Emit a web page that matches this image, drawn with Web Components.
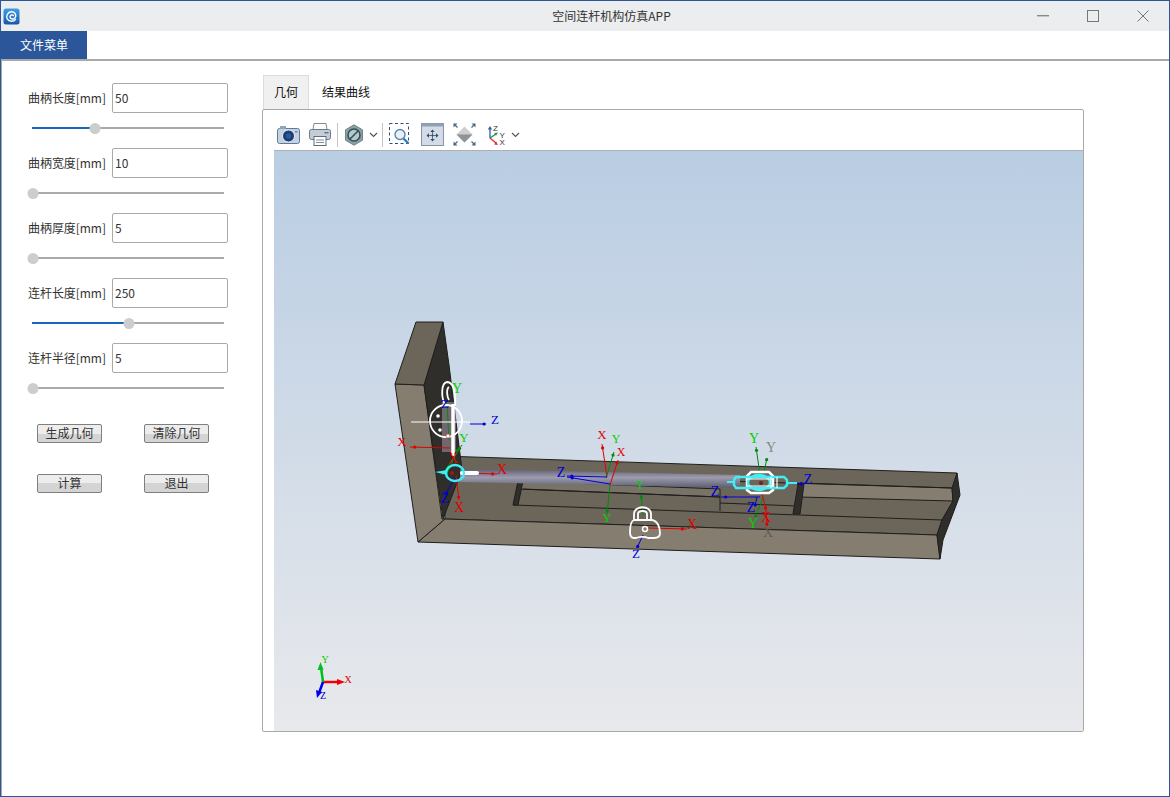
<!DOCTYPE html>
<html lang="zh"><head><meta charset="utf-8"><title>空间连杆机构仿真APP</title>
<style>
html,body{margin:0;padding:0;background:#fff}
body{font:12px "Noto Sans CJK SC","Liberation Sans",sans-serif;color:#333}
</style></head><body>
<app-window>
  <title-bar slot="title">空间连杆机构仿真APP</title-bar>
  <menu-bar slot="menu">文件菜单</menu-bar>
  <side-panel slot="side">
    <param-row label="曲柄长度[mm]" value="50" pct="33"></param-row>
    <param-row label="曲柄宽度[mm]" value="10" pct="0.5"></param-row>
    <param-row label="曲柄厚度[mm]" value="5" pct="0.5"></param-row>
    <param-row label="连杆长度[mm]" value="250" pct="50.5"></param-row>
    <param-row label="连杆半径[mm]" value="5" pct="0.5"></param-row>
    <button-grid>
      <push-btn>生成几何</push-btn><push-btn>清除几何</push-btn>
      <push-btn>计算</push-btn><push-btn>退出</push-btn>
    </button-grid>
  </side-panel>
  <tab-view slot="main">
    <cad-toolbar></cad-toolbar>
    <cad-viewport></cad-viewport>
  </tab-view>
</app-window>
<script>
const def=(name,css,html,init)=>customElements.define(name,class extends HTMLElement{
  connectedCallback(){ if(this.shadowRoot)return; const r=this.attachShadow({mode:'open'});
    r.innerHTML='<style>'+css+'</style>'+(typeof html==='function'?html(this):html); if(init)init(r,this);}
});
def('app-window',`:host{display:flex;flex-direction:column;box-sizing:border-box;width:1170px;height:797px;border:1px solid #2b579a;background:#fff;overflow:hidden}
.body{flex:1;display:flex;border-top:2px solid #a9a9a9;border-left:1px solid #a9a9a9;min-height:0}`,
`<slot name="title"></slot><slot name="menu"></slot><div class="body"><slot name="side"></slot><slot name="main"></slot></div>`);
def('title-bar',`:host{display:flex;align-items:center;height:30px;background:#ebedef;color:#333;font-size:12px}
.ic{margin:0 0 0 2px;display:block}
.t{flex:1;text-align:center;padding:0 0 2px 183px}
.b{width:46px;height:30px;display:flex;align-items:center;justify-content:center}
.bs{display:flex;margin-right:3px}`,
`<svg class="ic" width="17" height="17" viewBox="0 0 17 17"><defs><linearGradient id="g" x1="0" y1="0" x2="0" y2="1"><stop offset="0" stop-color="#3f9fe8"/><stop offset="1" stop-color="#1557a8"/></linearGradient></defs><rect x=".5" y=".5" width="16" height="16" rx="2.5" fill="url(#g)"/><path d="M12.6 11.4C10.8 14 6.2 13.9 4.4 11.2 2.6 8.2 4.6 4 8.4 3.800c3-.1 4.800 2.200 4.300 4.600-.4 2-2.600 3.100-4.300 2.400-1.400-.6-1.800-2.400-.8-3.400.8-.8 2.200-.7 2.800.2" fill="none" stroke="#fff" stroke-width="1.400" stroke-linecap="round"/></svg>
<div class="t"><slot></slot></div>
<div class="bs"><div class="b"><svg width="12" height="2"><rect width="12" height="1.400" fill="#8a8a8a"/></svg></div><div class="b" style="margin-left:4px"><svg width="12" height="12"><rect x=".5" y=".5" width="11" height="11" fill="none" stroke="#777"/></svg></div><div class="b" style="margin-left:4px"><svg width="12" height="12"><path d="M.5.5l11 11M11.500.5l-11 11" stroke="#777" fill="none"/></svg></div></div>`);
def('menu-bar',`:host{display:flex;height:28px;background:#fff}
.m{width:86px;background:#2b579a;color:#fff;display:flex;align-items:center;justify-content:center;font-size:12px;padding-bottom:1px;box-sizing:border-box}`,`<div class="m"><slot></slot></div>`);
def('side-panel',`:host{display:block;width:260px;flex:none;box-sizing:border-box;padding:22px 0 0 0}`,`<slot></slot>`);
def('param-row',`:host{display:block;height:65px}
.r{display:flex;align-items:center;height:30px;padding-left:26px}
.l{width:84px;flex:none;font-size:12px;color:#333;white-space:nowrap;padding-bottom:2px;letter-spacing:-.05px}
.i{box-sizing:border-box;width:116px;height:30px;border:1px solid #a9a9a9;border-radius:2px;padding:0 0 2px 2px;display:flex;align-items:center;font:12px "Noto Sans CJK SC","Liberation Sans",sans-serif;color:#333}
.s{position:relative;margin:13px 0 0 30px;width:192px;height:4px;background:linear-gradient(#aaa,#aaa) center/100% 2px no-repeat}
.f{height:100%;background:linear-gradient(#1468bd,#1468bd) center/100% 2px no-repeat}
.h{position:absolute;top:-3.500px;width:11px;height:11px;border-radius:50%;background:#cdcdcd;transform:translateX(-5.500px)}`,
h=>`<div class="r"><span class="l">${h.getAttribute('label')}</span><span class="i">${h.getAttribute('value')}</span></div>
<div class="s"><div class="f" style="width:${h.getAttribute('pct')==='0.5'?0:h.getAttribute('pct')}%"></div><div class="h" style="left:${h.getAttribute('pct')}%"></div></div>`);
def('button-grid',`:host{display:grid;grid-template-columns:65px 65px;column-gap:42px;row-gap:31px;padding:16px 0 0 35px}`,`<slot></slot>`);
def('push-btn',`:host{display:block;box-sizing:border-box;height:19px;border:1px solid #7f7f7f;border-radius:2px;background:linear-gradient(#ededed 0,#ededed 50%,#d4d4d4 50%,#d4d4d4 100%);font-size:12px;line-height:16px;text-align:center;color:#333}`,`<slot></slot>`);
def('tab-view',`:host{display:flex;flex-direction:column;flex:none;width:822px;margin:14px 0 0 0;height:657px}
.tabs{display:flex;height:34px;flex:none;padding-left:1px}
.tab{display:flex;align-items:center;justify-content:center;font-size:12px;color:#111;box-sizing:border-box;padding-bottom:2px}
.a{width:46px;background:#f0f0f0;border:1px solid #dcdcdc;border-bottom:0}
.n{width:74px}
.pane{flex:1;min-height:0;border:1px solid #a9a9a9;border-radius:2px;padding-left:11px;display:flex;flex-direction:column}`,
`<div class="tabs"><div class="tab a">几何</div><div class="tab n">结果曲线</div></div><div class="pane"><slot></slot></div>`);
const chev=m=>`<svg width="9" height="6" style="margin-left:${m}px" viewBox="0 0 9 6"><path d="M1 1l3.500 3.500L8 1" fill="none" stroke="#555" stroke-width="1.200"/></svg>`;
def('cad-toolbar',`:host{display:flex;align-items:center;box-sizing:border-box;height:40px;flex:none;padding-top:9px}
svg{display:block;flex:none}.sp{width:1px;height:24px;background:#c4c4c4;flex:none}`,
`<svg width="23" height="19" style="margin-left:3px" viewBox="0 0 23 19"><rect x=".5" y="3.500" width="22" height="15" rx="2" fill="#c4d2e2" stroke="#5f7a96"/><rect x="3" y="1" width="6" height="3" fill="#8ea4bc"/><circle cx="11.500" cy="11" r="6" fill="#1b3d72" stroke="#e6edf5"/><circle cx="11.500" cy="11" r="2.800" fill="#2a589c"/><rect x="18" y="6" width="2.500" height="1.500" fill="#6f8aa6"/></svg>
<svg width="22" height="23" style="margin-left:9px" viewBox="0 0 22 23"><path d="M5 .5h12l1 6H4z" fill="#fff" stroke="#7f8c9a"/><rect x=".5" y="6.500" width="21" height="10" rx="2" fill="#c4ccd6" stroke="#6a7a8a"/><rect x="5" y="13.500" width="12" height="9" fill="#fff" stroke="#5f6c7a"/><path d="M7 17h8M7 19.500h8" stroke="#7f8c9a"/><rect x="15.500" y="9" width="4" height="1.400" fill="#59738f"/></svg>
<div class="sp" style="margin-left:6px"></div>
<svg width="20" height="22" style="margin-left:6px" viewBox="0 0 20 22"><path d="M10 .8l8.500 5v10.400l-8.500 5-8.500-5V5.800z" fill="#8aa0a4" stroke="#6f8588"/><circle cx="10" cy="11" r="6" fill="#b7c8cb" stroke="#33505a" stroke-width="1.600"/><path d="M6 15l8-8" stroke="#33505a" stroke-width="1.600"/></svg>
${chev(5)}
<div class="sp" style="margin-left:4px"></div>
<svg width="22" height="23" style="margin-left:6px" viewBox="0 0 22 23"><rect x=".5" y=".5" width="19" height="20" fill="none" stroke="#2f4d6e" stroke-dasharray="3 2.500"/><circle cx="11" cy="11.500" r="5" fill="#e8eff6" stroke="#5a86ad" stroke-width="1.400"/><path d="M14.500 15.500l5 5" stroke="#2e7fc0" stroke-width="2.400"/></svg>
<svg width="23" height="23" style="margin-left:10px" viewBox="0 0 23 23"><rect x=".5" y=".5" width="22" height="22" fill="#d3dce6" stroke="#8496a8"/><rect x=".5" y=".5" width="22" height="3" fill="#8fa1b4"/><path d="M11.500 8v9M7 12.500h9" stroke="#5a7088"/><circle cx="11.500" cy="12.500" r="1" fill="#2f4d6e"/><path d="M11.500 6.500l-2.200 2.500h4.400zM11.500 18.500l-2.200-2.500h4.400zM5.500 12.500l2.500-2.200v4.400zM17.500 12.500L15 10.300v4.400z" fill="#2f4d6e"/></svg>
<svg width="23" height="23" style="margin-left:9px" viewBox="0 0 23 23"><path d="M11.500 3.500l8 8-8 8-8-8z" fill="#cfcfd1"/><path d="M3.500 11.500h16l-8 8z" fill="#8f9296"/><path d="M1 1l3.500 3.500M22 1l-3.500 3.500M1 22l3.500-3.500M22 22l-3.500-3.500" stroke="#4a6a8c" stroke-width="1.300"/><path d="M.5.5h4L.5 4.500zM22.500.5h-4l4 4zM.5 22.500h4l-4-4zM22.500 22.500h-4l4-4z" fill="#4a6a8c"/></svg>
<svg width="20" height="24" style="margin-left:11px" viewBox="0 0 20 24"><path d="M3 15V5" stroke="#2a5ea8" stroke-width="1.300"/><path d="M3 3L.8 6.500h4.400z" fill="#2a5ea8"/><path d="M3 15l6-4" stroke="#1e9a50" stroke-width="1.300"/><path d="M11 9.500l-3.800.4 1.800 2.800z" fill="#1e9a50"/><path d="M3 15l6 5" stroke="#d83030" stroke-width="1.300"/><path d="M11 22l-3.800-.6 1.900-2.800z" fill="#d83030"/><text x="6" y="8" font-size="8" font-family="Liberation Sans" fill="#333">Z</text><text x="12.500" y="14.500" font-size="8" font-family="Liberation Sans" fill="#333">Y</text><text x="12.500" y="22" font-size="8" font-family="Liberation Sans" fill="#333">X</text></svg>
${chev(4)}`);

const R='#e00000',G='#00d000',B='#0000d8',DG='#008a10',CY='#40eef6';
const ax=(a,b,c,d,col,w=1)=>`<line x1="${a}" y1="${b}" x2="${c}" y2="${d}" stroke="${col}" stroke-width="${w}"/><circle cx="${c+(a-c)*.12}" cy="${d+(b-d)*.12}" r="1.600" fill="${col}"/>`;
const lb=(t,x,y,col,s=13)=>`<text x="${x}" y="${y}" fill="${col}" font-size="${s}" font-family="Liberation Serif" text-anchor="middle" dominant-baseline="central">${t}</text>`;
const P=(pts,f)=>`<polygon points="${pts}" fill="${f}" stroke="#1e1e1c" stroke-width="1"/>`;
const D='#6c665a',L='#857e70',K='#2f2e2a';
const scene=`
<defs>
<linearGradient id="sky" x1="0" y1="0" x2="0" y2="1"><stop offset="0" stop-color="#b9cde3"/><stop offset="1" stop-color="#e8e9ec"/></linearGradient>
<linearGradient id="rod" x1="0" y1="0" x2="0" y2="1"><stop offset="0" stop-color="#5f5f74"/><stop offset=".45" stop-color="#9c9cae"/><stop offset="1" stop-color="#5c5c70"/></linearGradient>
</defs>
<rect x="274" y="150" width="809" height="581" fill="url(#sky)"/>
<path d="M274 150.500H1083" stroke="#b0b0b0"/>
${P('442,456 957,473 953,501 942,520 937,535 445,519',D)}
${P('800,483 952,488 953,501 800,497',L)}
${P('518,481 720,489 720,497 518,489','#797266')}
<path d="M463 473L952 488M523 489L720 497M720 497V511M720 503L797 506M513 505L942 520" stroke="#1e1e1c" fill="none"/>
${P('518,481 523,481 518,505 513,505',K)}
${P('798,484 804,484 800,514 793,514',K)}
${P('445,519 937,535 940,559 418,542',L)}
${P('957,473 960,495 943,540 940,559 937,535 942,520 953,501 952,488',K)}
${P('395,384 424,385 442,519 445,519 418,542',L)}
${P('424,385 443,322 449,365 462,470 443,519',K)}
${P('395,384 416,322 443,322 424,385',D)}
<polygon points="460,469 740,475 740,488 460,482" fill="url(#rod)"/>
<rect x="442" y="402" width="14" height="50" fill="#a598a8" opacity=".55"/>
<path d="M323 682h16" stroke="#f00000" stroke-width="2.500"/><path d="M345 682l-8-3v6z" fill="#f00000"/>
<path d="M323 682l-2-15" stroke="#00c020" stroke-width="2.500"/><path d="M320.500 662l-3 8h6z" fill="#00c020"/>
<path d="M323 682l-4 11" stroke="#0000f0" stroke-width="2.500"/><path d="M317 698l-1-8 6 2z" fill="#0000f0"/>
${lb('X',348,679,R,10)}${lb('Y',325,659,G,10)}${lb('Z',323,695,B,10)}
${ax(442,475,462,445,DG)}${ax(447,474,459,447,DG)}${ax(447,404,449,440,DG)}
${ax(450,448,410,447,R)}${ax(460,473,497,474,R)}${ax(456,475,459,500,R)}${ax(455,478,445,495,B)}
<path d="M411 422H470" stroke="#fff" stroke-width="1.200"/>${ax(470,424,486,424,B)}
<path d="M453 404V456" stroke="#fff" stroke-width="3.500"/>
<ellipse cx="446" cy="421" rx="16" ry="16" fill="none" stroke="#fff" stroke-width="1.800"/>
<path d="M445 405c-4-8-4-22 2-23 7 0 9 12 8 24" fill="none" stroke="#fff" stroke-width="1.800"/><path d="M449 387c-3 2-2 10 0 13" fill="none" stroke="#fff" stroke-width="1.800"/>
<circle cx="438" cy="416" r="1.800" fill="#fff"/><circle cx="440" cy="430" r="1.800" fill="#fff"/><circle cx="448" cy="436" r="2" fill="#fff" stroke="#d03030" stroke-width=".6"/>
<path d="M462 473h15" stroke="#fff" stroke-width="4" stroke-linecap="round"/>
<ellipse cx="455" cy="473" rx="9" ry="8" fill="none" stroke="${CY}" stroke-width="2.400"/>
<path d="M435 472l12-2v5z" fill="${CY}"/><circle cx="452" cy="473" r="2" fill="#a01818"/>
${lb('Y',457,388,G,14)}${lb('Z',445,403,B,13)}${lb('Z',495,419,B)}${lb('X',402,441,R)}${lb('Y',464,437,G)}${lb('X',453,458,R,14)}${lb('X',502,469,R,14)}${lb('Z',445,498,B,14)}${lb('X',459,507,R,14)}
${ax(607,477,602,444,R)}${ax(606,478,614,452,DG)}${ax(610,485,618,460,R)}${ax(607,477,567,476,B)}${ax(610,484,567,477,B)}${ax(610,485,607,514,DG)}
${lb('X',602,434,R)}${lb('Y',616,439,G,12)}${lb('X',621,452,R,12)}${lb('Z',561,472,B,14)}${lb('Y',607,517,G)}
${ax(643,515,641,495,DG)}${ax(648,528,687,529,R)}${ax(643,535,637,548,B)}
<path d="M634 520v-6c0-9 17-9 17 0v6M638 520v-6c0-4 9-4 9 0v6" fill="none" stroke="#fff" stroke-width="1.800"/>
<path d="M634 520h18c6 1 8 8 8 13 0 4-3 5-6 5h-6c-3-2-10-1-12 0h-2c-3 0-4-2-4-6 0-6 1-11 4-12z" fill="none" stroke="#fff" stroke-width="1.800"/>
<circle cx="645" cy="529" r="2.500" fill="none" stroke="#fff" stroke-width="1.500"/>
${lb('Y',640,484,G)}${lb('X',692,524,R,14)}${lb('Z',636,553,B)}
${ax(760,475,756,447,DG)}${ax(764,472,767,458,DG)}${ax(787,483,803,484,B)}${ax(760,497,721,497,B)}${ax(757,497,755,506,B)}${ax(762,493,766,510,R)}${ax(766,510,767,526,R)}${ax(763,498,755,518,DG)}
<path d="M751 472h18l4 4v14l-4 3h-18l-4-3v-14z" fill="#6c665a" stroke="#fff" stroke-width="2.500"/>
<path d="M736 477h48l3 3v5l-3 3h-48l-2-3v-5z" fill="none" stroke="${CY}" stroke-width="2.400"/>
<ellipse cx="759" cy="482.500" rx="11" ry="7.500" fill="none" stroke="${CY}" stroke-width="2.400"/>
<path d="M727 482h8M787 483h10" stroke="${CY}" stroke-width="2"/>
<path d="M748 479h24M748 486h24M771 477v11M777 477v11" stroke="#fff" stroke-width="1.200"/><circle cx="761" cy="483" r="2" fill="#702020"/>
${lb('Y',754,438,G,14)}${lb('Y',771,447,'#7f8a80',14)}${lb('Z',808,479,B,14)}${lb('Z',715,491,B,14)}${lb('Z',751,507,B,14)}${lb('X',766,517,R,14)}${lb('X',768,532,'#665a50',14)}${lb('Y',753,523,G,14)}
`;
def('cad-viewport',`:host{display:block;flex:1;min-height:0;overflow:hidden}svg{display:block}`,
`<svg width="809" height="581" viewBox="274 150 809 581">${scene}</svg>`);
</script>
</body></html>
